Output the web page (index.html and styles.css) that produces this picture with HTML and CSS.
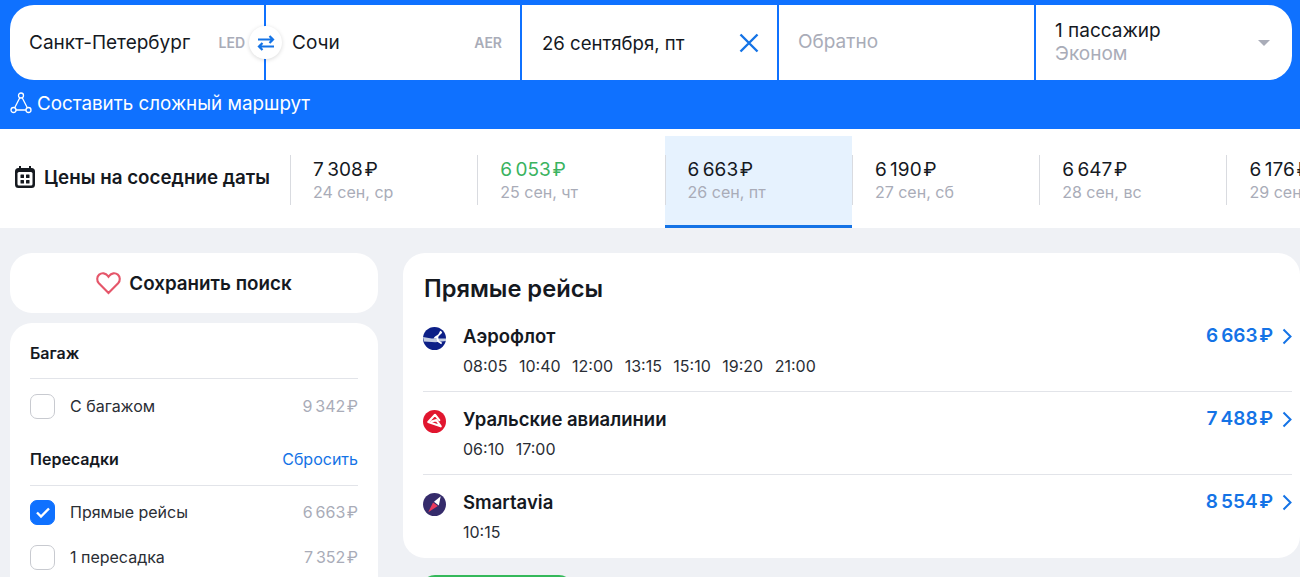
FILE: index.html
```html
<!DOCTYPE html>
<html lang="ru">
<head>
  <meta charset="UTF-8" />
  <title>Санкт-Петербург — Сочи</title>
  <link rel="stylesheet" href="styles.css">
</head>
<body>

  <!-- Search -->
  <div class="search">
    <div class="search-bar">
      <div class="field field-from">
        <span class="field-text">Санкт-Петербург</span>
        <span class="iata">LED</span>
        <div class="swap">
          <svg width="18" height="16" viewBox="0 0 18 16" fill="none" stroke="#1473e6" stroke-width="2.200">
            <path d="M1 4.500h15M12.500 1l3.500 3.500L12.500 8" />
            <path d="M17 11.500H2M5.500 8L2 11.500 5.500 15" />
          </svg>
        </div>
      </div>
      <div class="field field-to">
        <span class="field-text">Сочи</span>
        <span class="iata">AER</span>
      </div>
      <div class="field field-date">
        <span class="field-text date-text">26 сентября, пт</span>
        <svg class="clear" width="20" height="20" viewBox="0 0 20 20" fill="none" stroke="#1473e6" stroke-width="2.400">
          <path d="M1.500 1.500l17 17M18.500 1.500l-17 17" />
        </svg>
      </div>
      <div class="field field-back">
        <span class="field-text muted back-text">Обратно</span>
      </div>
      <div class="field field-pass">
        <div class="pass-text">
          <div class="field-text">1 пассажир</div>
          <div class="field-text muted">Эконом</div>
        </div>
        <div class="caret"></div>
      </div>
    </div>
    <div class="complex">
      <svg width="22" height="22" viewBox="0 0 22 22" fill="none" stroke="#fff" stroke-width="1.300">
        <circle cx="11" cy="3.500" r="2.500" />
        <circle cx="3.500" cy="18" r="2.500" />
        <circle cx="18.500" cy="18" r="2.500" />
        <path d="M9.800 5.700L4.700 15.800M12.200 5.700l5.100 10.100M6 18h10" />
      </svg>
      Составить сложный маршрут
    </div>
  </div>

  <!-- Neighbour dates -->
  <div class="dates">
    <div class="dates-title">
      <svg width="22" height="22" viewBox="0 0 22 22">
        <path fill="#15191f" d="M5 0h2v2h8V0h2v2h.500A3.500 3.500 0 0 1 21 5.500v13a3.500 3.500 0 0 1-3.500 3.500h-13A3.500 3.500 0 0 1 1 18.500v-13A3.500 3.500 0 0 1 4.500 2H5z" />
        <rect x="3.500" y="6" width="15" height="13.500" rx="1.500" fill="#fff" />
        <g fill="#15191f">
          <rect x="6.500" y="8.500" width="3.500" height="3.500" rx=".5" />
          <rect x="12" y="8.500" width="3.500" height="3.500" rx=".5" />
          <rect x="6.500" y="14" width="3.500" height="3.500" rx=".5" />
          <rect x="12" y="14" width="3.500" height="3.500" rx=".5" />
        </g>
      </svg>
      Цены на соседние даты
    </div>
    <div class="date-list">
      <div class="date-item">
        <div class="date-inner"><div class="date-price">7&#8201;308&#8202;₽</div><div class="date-day">24 сен, ср</div></div>
      </div>
      <div class="date-item">
        <div class="date-inner"><div class="date-price cheap">6&#8201;053&#8202;₽</div><div class="date-day">25 сен, чт</div></div>
      </div>
      <div class="date-item active">
        <div class="date-inner"><div class="date-price">6&#8201;663&#8202;₽</div><div class="date-day">26 сен, пт</div></div>
      </div>
      <div class="date-item">
        <div class="date-inner"><div class="date-price">6&#8201;190&#8202;₽</div><div class="date-day">27 сен, сб</div></div>
      </div>
      <div class="date-item">
        <div class="date-inner"><div class="date-price">6&#8201;647&#8202;₽</div><div class="date-day">28 сен, вс</div></div>
      </div>
      <div class="date-item">
        <div class="date-inner"><div class="date-price">6&#8201;176&#8202;₽</div><div class="date-day">29 сен, пн</div></div>
      </div>
    </div>
  </div>

  <!-- Content -->
  <div class="content">
    <div class="sidebar">
      <div class="save-btn">
        <svg width="25" height="24" viewBox="0 0 26 24" fill="none" stroke="#e5566a" stroke-width="2.200">
          <path d="M13 22.500L3 12.200C.5 9.500.8 5.500 3.300 3.300c2.700-2.200 6.800-1.700 9 1.200l.7 1 .7-1c2.200-2.900 6.300-3.400 9-1.200 2.500 2.200 2.800 6.200.3 8.900z" />
        </svg>
        Сохранить поиск
      </div>
      <div class="filters">
        <div class="filter-head"><span>Багаж</span></div>
        <div class="filter-row">
          <span class="check"></span>
          <span class="filter-name">С багажом</span>
          <span class="filter-price">9&#8201;342&#8202;₽</span>
        </div>
        <div class="filter-head second"><span>Пересадки</span><span class="reset">Сбросить</span></div>
        <div class="filter-row">
          <span class="check checked">
            <svg width="16" height="13" viewBox="0 0 16 13" fill="none" stroke="#fff" stroke-width="2.400"><path d="M2 6.500l4 4 8-8" /></svg>
          </span>
          <span class="filter-name">Прямые рейсы</span>
          <span class="filter-price">6&#8201;663&#8202;₽</span>
        </div>
        <div class="filter-row">
          <span class="check"></span>
          <span class="filter-name">1 пересадка</span>
          <span class="filter-price">7&#8201;352&#8202;₽</span>
        </div>
      </div>
    </div>

    <div class="main">
      <div class="direct">
        <h2 class="direct-title">Прямые рейсы</h2>

        <div class="flight">
          <svg class="airline" width="23" height="23" viewBox="0 0 24 24">
            <circle cx="12" cy="12" r="12" fill="#0c1f87" />
            <path fill="#c4cde2" d="M0 10.500l9 1.500h15v2.500l-11 1.500-12-1z" />
            <path fill="#fff" d="M11 12c1-2.500 3.500-3 5-4.500 1.500-1.500 1-3 2.500-3.500l1.500 1.500c-.5 2-2.500 2.500-3.500 4-1 1.500-.5 3 .5 5l3 2-1 1.500-4-2.500-1-3.500z" />
          </svg>
          <div class="flight-info">
            <div class="flight-name">Аэрофлот</div>
            <div class="flight-times"><span>08:05</span><span>10:40</span><span>12:00</span><span>13:15</span><span>15:10</span><span>19:20</span><span>21:00</span></div>
          </div>
          <div class="flight-price">6&#8201;663&#8202;₽
            <svg width="10" height="17" viewBox="0 0 10 17" fill="none" stroke="#1473e6" stroke-width="2"><path d="M1.500 1.500L8.500 8.500l-7 7" /></svg>
          </div>
        </div>

        <div class="flight">
          <svg class="airline" width="23" height="23" viewBox="0 0 24 24">
            <circle cx="12" cy="12" r="12" fill="#e1162f" />
            <path fill="none" stroke="#fff" stroke-width="2.200" stroke-linejoin="round" stroke-linecap="round" d="M17 10.500L12.500 5 5.500 12.500 18.500 17 14 10.500 9 12" />
          </svg>
          <div class="flight-info">
            <div class="flight-name">Уральские авиалинии</div>
            <div class="flight-times"><span>06:10</span><span>17:00</span></div>
          </div>
          <div class="flight-price">7&#8201;488&#8202;₽
            <svg width="10" height="17" viewBox="0 0 10 17" fill="none" stroke="#1473e6" stroke-width="2"><path d="M1.500 1.500L8.500 8.500l-7 7" /></svg>
          </div>
        </div>

        <div class="flight">
          <svg class="airline" width="23" height="23" viewBox="0 0 24 24">
            <circle cx="12" cy="12" r="12" fill="#352b6b" />
            <path fill="#fff" d="M18.500 3.500l-2 9.500-5-4z" />
            <path fill="#ea3a5c" d="M10.500 10l5 3.500L5.500 20z" />
          </svg>
          <div class="flight-info">
            <div class="flight-name">Smartavia</div>
            <div class="flight-times"><span>10:15</span></div>
          </div>
          <div class="flight-price">8&#8201;554&#8202;₽
            <svg width="10" height="17" viewBox="0 0 10 17" fill="none" stroke="#1473e6" stroke-width="2"><path d="M1.500 1.500L8.500 8.500l-7 7" /></svg>
          </div>
        </div>
      </div>
      <div class="green-btn"></div>
    </div>
  </div>

</body>
</html>
```

FILE: styles.css
```css
html, body {
  margin: 0;
  padding: 0;
  height: 100%;
  overflow: hidden;
}

body {
  font-family: Inter, "Noto Sans", sans-serif;
  background: #eff1f5;
  color: #15191f;
}

.search {
  background: #0f71ff;
  padding: 5px 8px 0 10px;
  height: 124px;
}

.search-bar {
  display: grid;
  grid-template-columns: 254px 254px 255px 255px 256px;
  column-gap: 2px;
  height: 75px;
}

.field {
  background: white;
  display: flex;
  align-items: center;
  justify-content: space-between;
  position: relative;
}

.field-from {
  border-radius: 24px 0 0 24px;
  padding: 0 19px 0 19px;
}

.field-to {
  padding: 0 18px 0 26px;
}

.field-date {
  padding: 0 18px 0 20px;
}

.field-back {
  padding: 0 20px 0 19px;
}

.field-pass {
  border-radius: 0 24px 24px 0;
  padding: 0 22px 0 19px;
}

.field-text {
  font-size: 19px;
  line-height: 24px;
}

.date-text {
  font-size: 18.600px;
}

.muted {
  color: #a9acb8;
}

.back-text {
  margin-top: -2px;
}

.pass-text {
  margin-top: -2px;
}

.pass-text .field-text {
  line-height: 23px;
}

.iata {
  font-size: 14px;
  font-weight: 600;
  color: #a9acb8;
}

.swap {
  position: absolute;
  right: -18px;
  top: 21px;
  width: 33px;
  height: 33px;
  background: white;
  border-radius: 50%;
  box-shadow: 0 1px 4px rgba(0,0,0,0.15);
  display: flex;
  align-items: center;
  justify-content: center;
  z-index: 2;
}

.caret {
  width: 0;
  height: 0;
  border-left: 6px solid transparent;
  border-right: 6px solid transparent;
  border-top: 6px solid #a9acb8;
}

.complex {
  display: flex;
  align-items: center;
  gap: 5px;
  color: white;
  font-size: 18.800px;
  margin-top: 11px;
  height: 24px;
}

.dates {
  background: white;
  height: 99px;
  display: flex;
  overflow: hidden;
}

.dates-title {
  width: 290px;
  flex-shrink: 0;
  box-sizing: border-box;
  padding: 0 0 3px 14px;
  display: flex;
  align-items: center;
  gap: 8px;
  font-size: 18.800px;
  font-weight: 600;
}

.date-list {
  display: flex;
  flex-shrink: 0;
}

.date-item {
  width: 187.300px;
  margin-top: 7px;
  box-sizing: border-box;
  display: flex;
  align-items: flex-start;
}

.date-inner {
  margin-top: 19px;
  height: 50px;
  box-sizing: border-box;
  width: 100%;
  padding: 2px 0 0 22px;
  border-left: 1px solid #d9dbe0;
}

.date-item.active {
  background: #e6f2fe;
  border-bottom: 3px solid #1473e6;
}

.date-price {
  font-size: 19px;
  line-height: 26px;
}

.date-price.cheap {
  color: #3ab35f;
}

.date-day {
  font-size: 16px;
  line-height: 19px;
  color: #a9acb8;
}

.content {
  display: flex;
  padding: 25px 0 0 10px;
  gap: 25px;
}

.sidebar {
  width: 368px;
  flex-shrink: 0;
}

.save-btn {
  background: white;
  border-radius: 22px;
  height: 60px;
  display: flex;
  align-items: center;
  justify-content: center;
  gap: 8px;
  font-size: 18.800px;
  font-weight: 600;
}

.filters {
  background: white;
  border-radius: 22px;
  margin-top: 10px;
  padding: 20px 20px;
  height: 400px;
}

.filter-head {
  display: flex;
  justify-content: space-between;
  align-items: center;
  font-size: 16px;
  font-weight: 600;
  height: 20px;
  padding-bottom: 15px;
  border-bottom: 1px solid #e2e4e9;
  margin-bottom: 15px;
}

.filter-head.second {
  margin-top: 30px;
  padding-bottom: 16px;
  margin-bottom: 14px;
}

.reset {
  font-weight: 400;
  color: #1473e6;
}

.filter-row {
  display: flex;
  align-items: center;
  height: 25px;
  margin-bottom: 20px;
  font-size: 16px;
  color: #2a2e35;
}

.check {
  width: 23px;
  height: 23px;
  border: 1px solid #c8cad0;
  border-radius: 7px;
  margin-right: 15px;
  display: flex;
  align-items: center;
  justify-content: center;
}

.check.checked {
  background: #0f71ff;
  border-color: #0f71ff;
}

.filter-name {
  flex: 1;
  margin-top: -2px;
}

.filter-price {
  color: #a9acb8;
  font-size: 16px;
  margin-top: -2px;
}

.main {
  flex: 1;
  min-width: 0;
}

.direct {
  background: white;
  border-radius: 22px;
  padding: 20px 8px 0 20px;
  height: 285px;
}

.direct-title {
  margin: 0 0 19px 1px;
  font-size: 23.700px;
  font-weight: 600;
  line-height: 32px;
}

.flight {
  display: flex;
  align-items: flex-start;
  height: 67px;
  margin-bottom: 15px;
  border-bottom: 1px solid #e2e4e9;
}

.flight:last-child {
  border-bottom: none;
}

.airline {
  flex-shrink: 0;
  margin-right: 17px;
  margin-top: 3px;
}

.flight-info {
  flex: 1;
}

.flight-name {
  font-size: 18.500px;
  font-weight: 600;
  line-height: 24px;
}

.flight-times {
  display: flex;
  gap: 11.500px;
  margin-top: 6px;
  font-size: 16px;
  line-height: 24px;
  color: #2a2e35;
}

.flight-price {
  display: flex;
  align-items: center;
  gap: 9px;
  font-size: 19px;
  font-weight: 600;
  line-height: 24px;
  color: #1473e6;
}

.green-btn {
  width: 152px;
  height: 40px;
  margin: 17px 0 0 18px;
  background: #34b85a;
  border-radius: 14px;
}
```
